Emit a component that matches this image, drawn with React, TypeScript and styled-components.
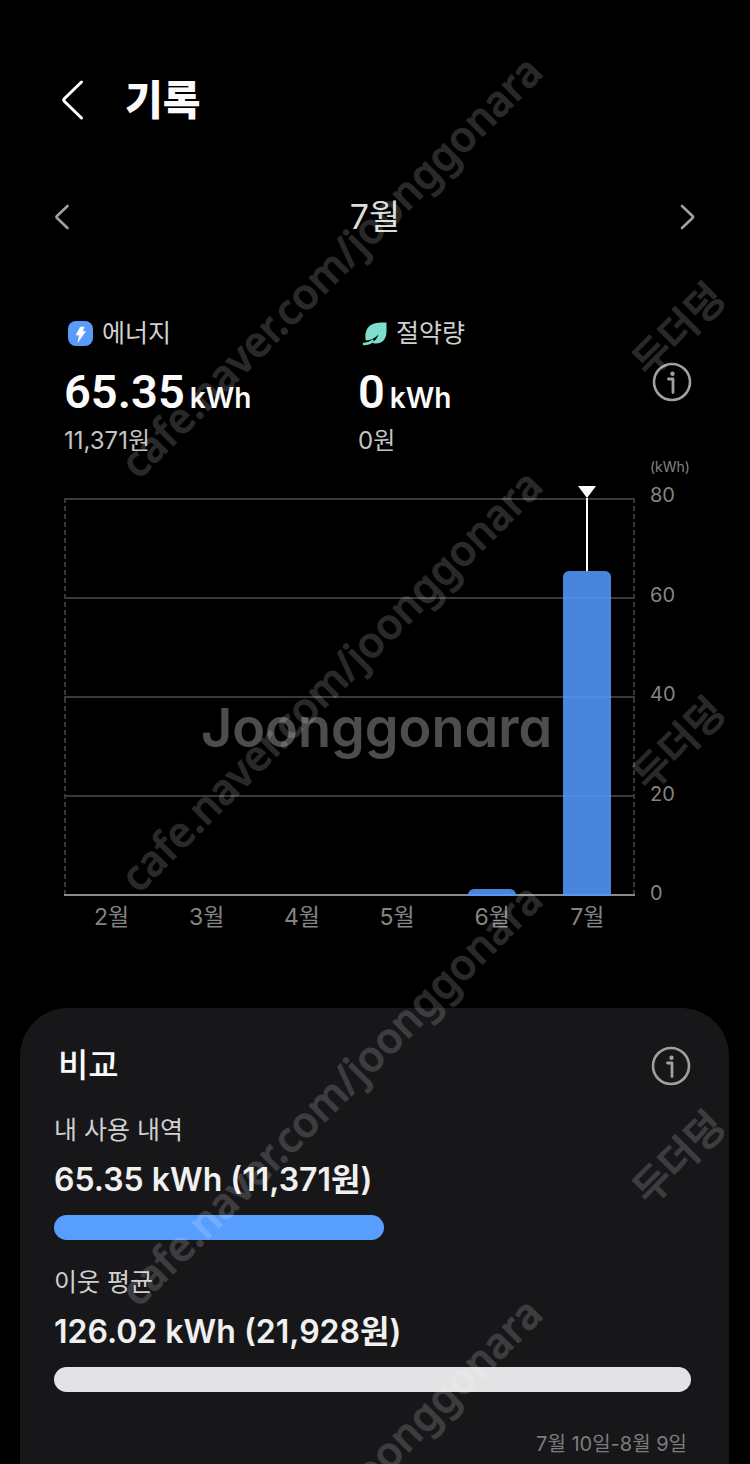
import React from "react";
import styled, { createGlobalStyle } from "styled-components";

const GlobalStyle = createGlobalStyle`
  * { box-sizing: border-box; }
  body {
    margin: 0;
    background: #000;
    color: #fafafa;
    font-family: Inter, "Noto Sans CJK KR", sans-serif;
  }
  button {
    display: flex;
    padding: 0;
    border: 0;
    background: none;
    color: inherit;
    cursor: pointer;
  }
  h1, h2, p { margin: 0; font-weight: inherit; }
`;

const Screen = styled.main`
  position: relative;
  display: flex;
  flex-direction: column;
  min-height: 100vh;
  overflow: hidden;
`;

const Header = styled.header`
  display: flex;
  align-items: center;
  gap: 40px;
  padding: 70px 60px 0;
`;

const Title = styled.h1`
  font-size: 41px;
  line-height: 60px;
  font-weight: 900;
`;

const MonthNav = styled.nav`
  display: flex;
  align-items: center;
  justify-content: space-between;
  margin-top: 62px;
  padding: 0 54px;
  color: #a0a0a0;
`;

const Month = styled.p`
  font-size: 34px;
  line-height: 50px;
  font-weight: 400;
  color: #dcdcdc;
`;

const Summary = styled.section`
  display: flex;
  align-items: center;
  margin-top: 73px;
  padding: 0 58px 0 64px;
`;

const Stat = styled.div`
  flex: 1;
`;

const StatLabel = styled.p`
  display: flex;
  align-items: center;
  gap: 9px;
  padding-left: 4px;
  font-size: 25px;
  line-height: 36px;
  font-weight: 400;
  color: #d0d0d0;
`;

const StatValue = styled.p`
  display: flex;
  align-items: baseline;
  gap: 5px;
  margin-top: 16px;
  font-size: 28px;
  line-height: 50px;
  font-weight: 600;
`;

const Amount = styled.span`
  font-family: Roboto, sans-serif;
  font-size: 47px;
`;

const StatCost = styled.p`
  font-size: 24px;
  line-height: 36px;
  font-weight: 400;
  color: #c4c4c4;
`;

const InfoButton = styled.button`
  margin-bottom: 10px;
`;

const Chart = styled.section`
  display: grid;
  grid-template-columns: 1fr 50px;
  column-gap: 15px;
  padding: 0 50px 0 64px;
  color: #848484;
  font-weight: 400;
`;

const AxisUnit = styled.p`
  grid-column: 2;
  font-size: 14px;
  line-height: 16px;
  white-space: nowrap;
  height: 39px;
`;

const Plot = styled.div`
  position: relative;
  height: 398px;
  background:
    repeating-linear-gradient(#363636 0 5px, transparent 5px 8px) left / 2px 100% no-repeat,
    repeating-linear-gradient(#363636 0 5px, transparent 5px 8px) right / 2px 100% no-repeat;
`;

const GridLines = styled.div`
  position: absolute;
  inset: 0;
  display: flex;
  flex-direction: column;
  justify-content: space-between;
`;

const GridLine = styled.div<{ $base?: boolean }>`
  height: 2px;
  background: ${(p) => (p.$base ? "#8a8a8a" : "#3a3a3a")};
`;

const Bars = styled.div`
  position: relative;
  display: flex;
  height: 100%;
`;

const BarColumn = styled.div`
  flex: 1;
  display: flex;
  flex-direction: column;
  align-items: center;
  justify-content: flex-end;
`;

const Bar = styled.div`
  width: 48px;
  border-radius: 6px 6px 0 0;
  background: rgba(84, 153, 250, 0.87);
`;

const Stem = styled.div`
  position: relative;
  flex: 1;
  width: 2px;
  background: #fff;
`;

const Pointer = styled.svg`
  position: absolute;
  left: -8px;
  top: -12px;
`;

const AxisLabels = styled.div`
  display: flex;
  flex-direction: column;
  justify-content: space-between;
  height: 424px;
  margin: -16px 0 -10px;
  font-size: 20px;
  line-height: 26px;
`;

const MonthLabels = styled.div`
  display: flex;
  padding-top: 4px;
  font-size: 23px;
  line-height: 34px;
  text-align: center;
`;

const MonthLabel = styled.span`
  flex: 1;
`;

const Card = styled.section`
  flex: 1;
  margin: 74px 21px 0 20px;
  padding: 35px 38px 2px 34px;
  border-radius: 48px 48px 0 0;
  background: #17171a;
`;

const CardHeader = styled.div`
  display: flex;
  align-items: center;
  justify-content: space-between;
  padding-left: 4px;
`;

const CardTitle = styled.h2`
  font-size: 33px;
  line-height: 45px;
  font-weight: 500;
`;

const Usage = styled.div`
  margin-top: 24px;
`;

const UsageLabel = styled.p`
  font-size: 25px;
  line-height: 36px;
  font-weight: 400;
  color: #d0d0d0;
`;

const UsageValue = styled.p`
  margin-top: 7px;
  font-size: 32px;
  line-height: 50px;
  font-weight: 600;
  color: #f0f0f0;
`;

const Meter = styled.div<{ $color: string }>`
  height: 25px;
  margin-top: 10px;
  border-radius: 13px;
  background: ${(p) => p.$color};
`;

const Period = styled.p`
  margin-top: 36px;
  padding-right: 4px;
  font-size: 20px;
  line-height: 32px;
  font-weight: 400;
  text-align: right;
  color: #7c7c7c;
`;

const Watermarks = styled.div`
  position: absolute;
  inset: 0;
  overflow: hidden;
  pointer-events: none;
  color: #fff;
  white-space: nowrap;
`;

const Mark = styled.span<{ $x: number; $y: number; $size: number }>`
  position: absolute;
  left: ${(p) => p.$x}px;
  top: ${(p) => p.$y}px;
  font: 500 ${(p) => p.$size}px/56px "Noto Sans", "Noto Sans CJK KR", sans-serif;
  -webkit-text-stroke: 1px #fff;
  opacity: 0.16;
  transform: rotate(-45deg);
  transform-origin: left bottom;
`;

const Brand = styled.span`
  position: absolute;
  left: 0;
  right: 0;
  top: 690px;
  padding-left: 3px;
  text-align: center;
  font: 600 54px/76px Inter, sans-serif;
  font-feature-settings: "cv11";
  opacity: 0.3;
`;

const BoltIcon = () => (
  <svg width="25" height="25" viewBox="0 0 25 25" aria-hidden="true">
    <rect width="25" height="25" rx="8" fill="#5a9bfa" />
    <path d="M12.500 6h3.500l-1.500 4.500h3L10 21l1.500-7H8z" fill="#fff" stroke="#fff" strokeWidth="0.600" strokeLinejoin="round" />
  </svg>
);

const LeafIcon = () => (
  <svg width="25" height="25" viewBox="0 0 25 25" aria-hidden="true">
    <path
      d="M24.500 1.500V11c0 7-4.500 11.500-10.500 11.500-1.800 0-3-.3-4-.8 3-2 5.500-4.500 6.500-8.200-3 3-6.500 5.500-12.500 6C2.500 15.500 3.500 9 7 5.500 11 1.500 17 1.500 24.500 1.500z"
      fill="#7cdfce"
    />
    <path d="M2 23c3.500 0 6-1 8.500-3" fill="none" stroke="#7cdfce" strokeWidth="2.600" strokeLinecap="round" />
  </svg>
);

const InfoIcon = () => (
  <svg width="40" height="40" viewBox="0 0 40 40" fill="none" stroke="#a0a0a0" aria-hidden="true">
    <circle cx="20" cy="20" r="18" strokeWidth="2.600" />
    <circle cx="20.500" cy="11.700" r="2.200" fill="#a0a0a0" stroke="none" />
    <path d="M16.500 17h4.500v13.500" strokeWidth="2.800" strokeLinecap="round" strokeLinejoin="round" />
  </svg>
);

const months = [
  { name: "2월", value: 0 },
  { name: "3월", value: 0 },
  { name: "4월", value: 0 },
  { name: "5월", value: 0 },
  { name: "6월", value: 1.5 },
  { name: "7월", value: 65.35, selected: true },
];

const ticks = [80, 60, 40, 20, 0];

const usages = [
  { label: "내 사용 내역", text: "65.35 kWh (11,371원)", value: 65.35, color: "#589eff" },
  { label: "이웃 평균", text: "126.02 kWh (21,928원)", value: 126.02, color: "#e3e3e5" },
];

const addressRows = [0, 1, 2, 3];
const nameRows = [0, 1, 2];

export default function App() {
  return (
    <Screen>
      <GlobalStyle />
      <Header>
        <button aria-label="뒤로">
          <svg width="25" height="42" viewBox="0 0 25 42" fill="none" stroke="#fff" strokeWidth="3" strokeLinecap="round" strokeLinejoin="round">
            <path d="M21.500 3 4.500 19.500q-1.500 1.500 0 3L21.500 39" />
          </svg>
        </button>
        <Title>기록</Title>
      </Header>

      <MonthNav>
        <button aria-label="이전 달">
          <svg width="16" height="28" viewBox="0 0 16 28" fill="none" stroke="currentColor" strokeWidth="2.600" strokeLinecap="round" strokeLinejoin="round">
            <path d="M13.500 3 3 13q-1 1 0 2l10.500 10" />
          </svg>
        </button>
        <Month>7월</Month>
        <button aria-label="다음 달">
          <svg width="16" height="28" viewBox="0 0 16 28" fill="none" stroke="currentColor" strokeWidth="2.600" strokeLinecap="round" strokeLinejoin="round">
            <path d="M2 3 12.500 13q1 1 0 2L2 25" />
          </svg>
        </button>
      </MonthNav>

      <Summary>
        <Stat>
          <StatLabel><BoltIcon />에너지</StatLabel>
          <StatValue><Amount>65.35</Amount>kWh</StatValue>
          <StatCost>11,371원</StatCost>
        </Stat>
        <Stat>
          <StatLabel><LeafIcon />절약량</StatLabel>
          <StatValue><Amount>0</Amount>kWh</StatValue>
          <StatCost>0원</StatCost>
        </Stat>
        <InfoButton aria-label="에너지 정보"><InfoIcon /></InfoButton>
      </Summary>

      <Chart>
        <AxisUnit>(kWh)</AxisUnit>
        <Plot>
          <GridLines>
            {ticks.map((t) => <GridLine key={t} $base={t === 0} />)}
          </GridLines>
          <Bars>
            {months.map((m) => (
              <BarColumn key={m.name}>
                {m.selected && (
                  <Stem>
                    <Pointer width="18" height="12" viewBox="0 0 18 12">
                      <path d="M0 0h18L9 12z" fill="#fff" />
                    </Pointer>
                  </Stem>
                )}
                {m.value > 0 && <Bar style={{ height: `${(m.value / 80) * 100}%` }} />}
              </BarColumn>
            ))}
          </Bars>
        </Plot>
        <AxisLabels>
          {ticks.map((t) => <span key={t}>{t}</span>)}
        </AxisLabels>
        <MonthLabels>
          {months.map((m) => <MonthLabel key={m.name}>{m.name}</MonthLabel>)}
        </MonthLabels>
      </Chart>

      <Card>
        <CardHeader>
          <CardTitle>비교</CardTitle>
          <button aria-label="비교 정보"><InfoIcon /></button>
        </CardHeader>
        {usages.map((u) => (
          <Usage key={u.label}>
            <UsageLabel>{u.label}</UsageLabel>
            <UsageValue>{u.text}</UsageValue>
            <Meter $color={u.color} style={{ width: `${(u.value / 126.02) * 100}%` }} />
          </Usage>
        ))}
        <Period>7월 10일-8월 9일</Period>
      </Card>

      <Watermarks aria-hidden="true">
        {addressRows.map((row) => (
          <Mark key={row} $x={147} $y={433 + row * 414} $size={42}>cafe.naver.com/joonggonara</Mark>
        ))}
        {nameRows.map((row) => (
          <Mark key={row} $x={659} $y={332 + row * 414} $size={40}>두더덩</Mark>
        ))}
        <Brand>Joonggonara</Brand>
      </Watermarks>
    </Screen>
  );
}
